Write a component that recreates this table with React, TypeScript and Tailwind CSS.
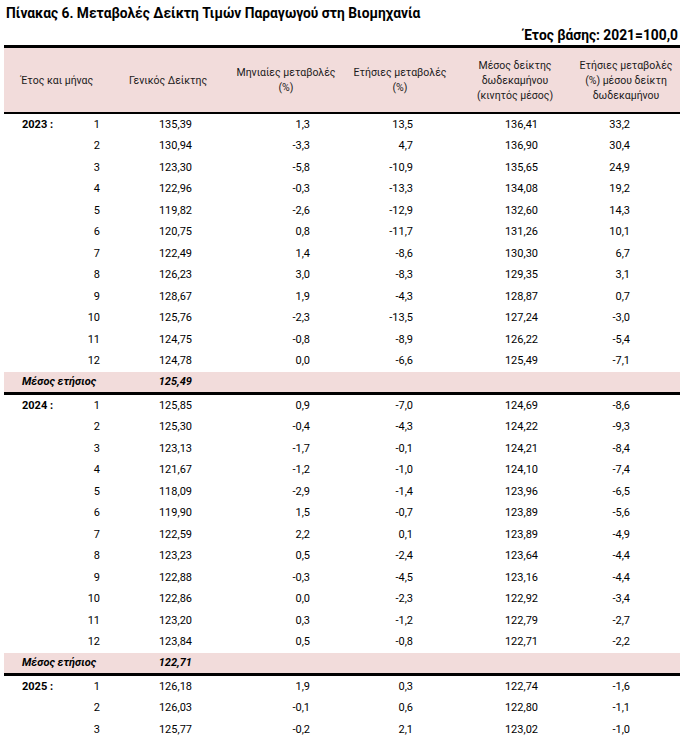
import React from "react";

type Row = [string, string, string, string, string, string];

const y2023: Row[] = [
  ["1", "135,39", "1,3", "13,5", "136,41", "33,2"],
  ["2", "130,94", "-3,3", "4,7", "136,90", "30,4"],
  ["3", "123,30", "-5,8", "-10,9", "135,65", "24,9"],
  ["4", "122,96", "-0,3", "-13,3", "134,08", "19,2"],
  ["5", "119,82", "-2,6", "-12,9", "132,60", "14,3"],
  ["6", "120,75", "0,8", "-11,7", "131,26", "10,1"],
  ["7", "122,49", "1,4", "-8,6", "130,30", "6,7"],
  ["8", "126,23", "3,0", "-8,3", "129,35", "3,1"],
  ["9", "128,67", "1,9", "-4,3", "128,87", "0,7"],
  ["10", "125,76", "-2,3", "-13,5", "127,24", "-3,0"],
  ["11", "124,75", "-0,8", "-8,9", "126,22", "-5,4"],
  ["12", "124,78", "0,0", "-6,6", "125,49", "-7,1"],
];
const y2024: Row[] = [
  ["1", "125,85", "0,9", "-7,0", "124,69", "-8,6"],
  ["2", "125,30", "-0,4", "-4,3", "124,22", "-9,3"],
  ["3", "123,13", "-1,7", "-0,1", "124,21", "-8,4"],
  ["4", "121,67", "-1,2", "-1,0", "124,10", "-7,4"],
  ["5", "118,09", "-2,9", "-1,4", "123,96", "-6,5"],
  ["6", "119,90", "1,5", "-0,7", "123,89", "-5,6"],
  ["7", "122,59", "2,2", "0,1", "123,89", "-4,9"],
  ["8", "123,23", "0,5", "-2,4", "123,64", "-4,4"],
  ["9", "122,88", "-0,3", "-4,5", "123,16", "-4,4"],
  ["10", "122,86", "0,0", "-2,3", "122,92", "-3,4"],
  ["11", "123,20", "0,3", "-1,2", "122,79", "-2,7"],
  ["12", "123,84", "0,5", "-0,8", "122,71", "-2,2"],
];
const y2025: Row[] = [
  ["1", "126,18", "1,9", "0,3", "122,74", "-1,6"],
  ["2", "126,03", "-0,1", "0,6", "122,80", "-1,1"],
  ["3", "125,77", "-0,2", "2,1", "123,02", "-1,0"],
];

const GRID = "grid grid-cols-[106px_116px_120px_108px_122px_104px]";

function DataRow({ year, r }: { year?: string; r: Row }) {
  return (
    <div className={`${GRID} h-[21.5px] items-center text-[11px] text-black`}>
      <div className="flex items-center justify-between pl-[18px] pr-[10px]">
        <span className="font-bold">{year ?? ""}</span>
        <span>{r[0]}</span>
      </div>
      <div className="text-right pr-[34px]">{r[1]}</div>
      <div className="text-right pr-[36px]">{r[2]}</div>
      <div className="text-right pr-[41px]">{r[3]}</div>
      <div className="text-right pr-[38px]">{r[4]}</div>
      <div className="text-right pr-[50px]">{r[5]}</div>
    </div>
  );
}

function MeanRow({ value }: { value: string }) {
  return (
    <div className={`${GRID} h-[20px] items-center bg-[#f2dcdb] border-b-[3px] border-black box-content text-[11px] font-bold italic text-black`}>
      <div className="pl-[18px] whitespace-nowrap">Μέσος ετήσιος</div>
      <div className="text-right pr-[34px]">{value}</div>
      <div />
      <div />
      <div />
      <div />
    </div>
  );
}

function Section({ year, rows, mean }: { year: string; rows: Row[]; mean?: string }) {
  return (
    <div>
      {rows.map((r, i) => (
        <DataRow key={i} year={i === 0 ? `${year} :` : undefined} r={r} />
      ))}
      {mean && <MeanRow value={mean} />}
    </div>
  );
}

export default function App() {
  return (
    <div className="w-[690px] h-[739px] overflow-hidden bg-white font-['Roboto',sans-serif] text-black">
      <div className="pt-[4px] pl-[6px] leading-[18px] h-[22px] text-[13.8px] font-bold whitespace-nowrap">
        Πίνακας 6. Μεταβολές Δείκτη Τιμών Παραγωγού στη Βιομηχανία
      </div>
      <div className="pt-[4px] pb-[1px] h-[23px] leading-[18px] text-right pr-[12px] text-[13.8px] font-bold whitespace-nowrap">
        Έτος βάσης: 2021=100,0
      </div>
      <div className="ml-[4px] w-[676px]">
        <div className={`${GRID} h-[64px] bg-[#f2dcdb] border-t-[3px] border-b-2 border-black box-content items-center text-center text-[10.5px] leading-[15px] text-[#1a1a1a]`}>
          <div>Έτος και μήνας</div>
          <div>Γενικός Δείκτης</div>
          <div>
            Μηνιαίες μεταβολές
            <br />
            (%)
          </div>
          <div>
            Ετήσιες μεταβολές
            <br />
            (%)
          </div>
          <div>
            Μέσος δείκτης
            <br />
            δωδεκαμήνου
            <br />
            (κινητός μέσος)
          </div>
          <div className="pr-[4px]">
            Ετήσιες μεταβολές
            <br />
            (%) μέσου δείκτη
            <br />
            δωδεκαμήνου
          </div>
        </div>
        <Section year="2023" rows={y2023} mean="125,49" />
        <Section year="2024" rows={y2024} mean="122,71" />
        <Section year="2025" rows={y2025} />
      </div>
    </div>
  );
}
